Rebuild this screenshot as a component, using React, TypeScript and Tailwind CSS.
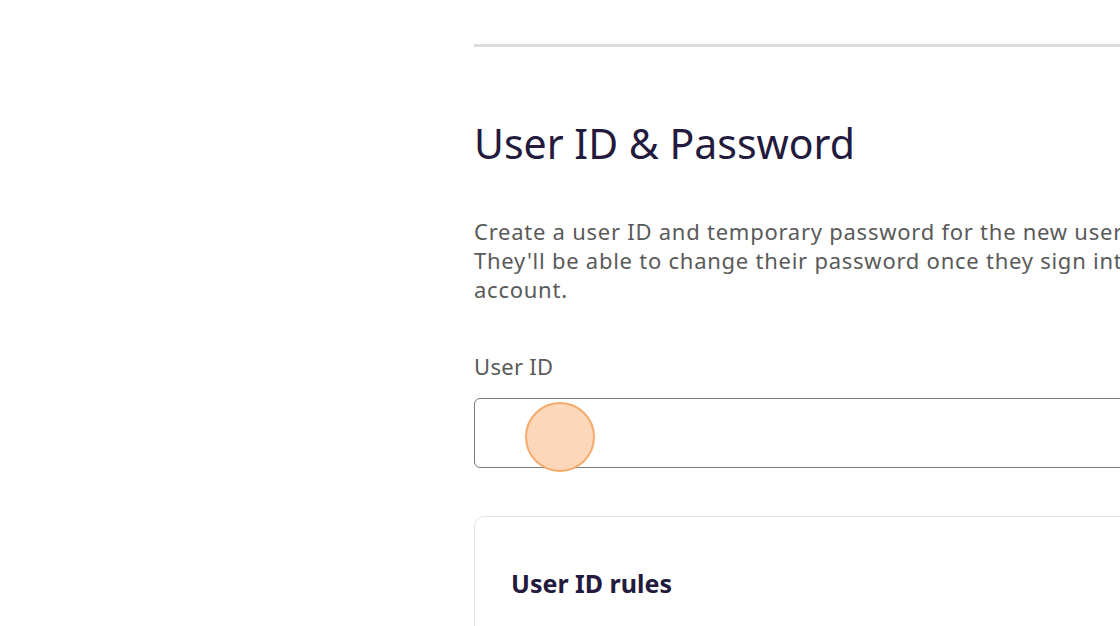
export default function App() {
  return (
    <div className="relative h-[626px] w-[1120px] overflow-hidden bg-white" style={{ fontFamily: '"Noto Sans", "Open Sans", sans-serif' }}>
      <div className="ml-[474px] w-[820px] pt-[44px]">
        <div className="h-[3px] w-full bg-[#dcdcdc]" />
        <h1 className="mt-[72px] text-[41px] leading-[48px] font-normal text-[#231a3d]">User ID &amp; Password</h1>
        <p className="mt-[50px] text-[22px] leading-[29px] tracking-[0.75px] text-[#5a5a5a]">
          Create a user ID and temporary password for the new user.
          <br />
          They'll be able to change their password once they sign into their account.
        </p>
        <label className="mt-[48px] block text-[22px] leading-[29px] tracking-[0.3px] text-[#5a5a5a]">User ID</label>
        <input
          type="text"
          className="mt-[17px] block h-[70px] w-full rounded-[6px] border border-[#7a7a7a] px-4 text-[20px] outline-none"
        />
        <div className="mt-[48px] rounded-t-[10px] border border-b-0 border-[#e3e3e3] px-9 pt-[49px] pb-10">
          <h2 className="text-[25px] leading-[34px] font-bold text-[#231a3d]">User ID rules</h2>
        </div>
      </div>
      <div className="pointer-events-none absolute left-[525px] top-[402px] h-[70px] w-[70px] rounded-full border-2 border-[#f6ab6c] bg-[#fdd7b9]" />
    </div>
  )
}
